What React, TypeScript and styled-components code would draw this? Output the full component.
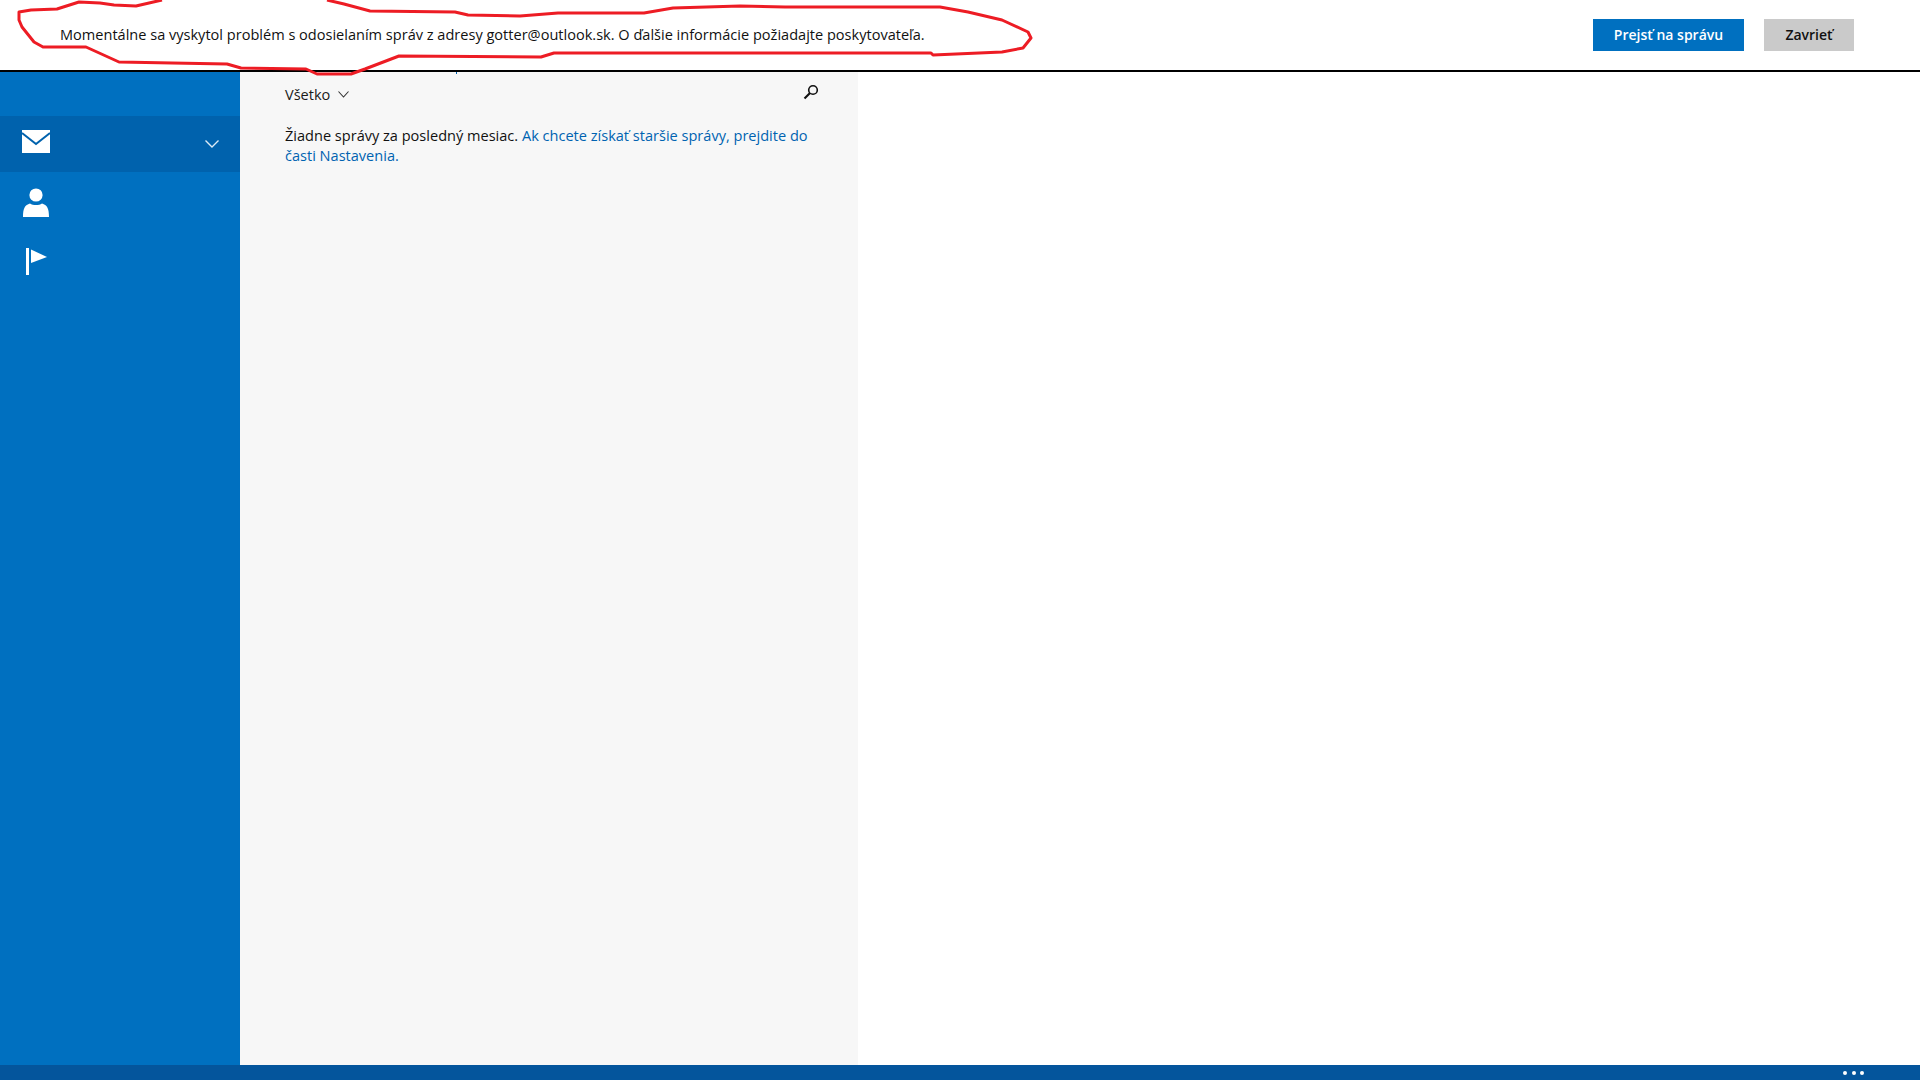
import React from 'react'
import styled, { createGlobalStyle } from 'styled-components'

const GlobalStyle = createGlobalStyle`
  html, body {
    margin: 0;
    padding: 0;
    overflow: hidden;
    background: #fff;
  }
  body {
    font-family: "Open Sans", "Liberation Sans", sans-serif;
    color: #1a1a1a;
  }
`

const Page = styled.div`
  position: relative;
  display: flex;
  flex-direction: column;
  width: 1920px;
  height: 1080px;
  overflow: hidden;
`

const Notice = styled.header`
  display: flex;
  align-items: center;
  flex: 0 0 70px;
  padding: 0 66px 0 60px;
  border-bottom: 2px solid #000;
`

const NoticeText = styled.p`
  flex: 1;
  margin: 0 0 2px;
  font-size: 14.56px;
  color: #111;
`

const NoticeButton = styled.button<{ $primary?: boolean }>`
  height: 32px;
  margin-left: 20px;
  padding: 0 0 2px;
  width: ${p => (p.$primary ? '151px' : '90px')};
  border: 0;
  font-family: inherit;
  font-size: 14px;
  font-weight: 600;
  background: ${p => (p.$primary ? '#0070c0' : '#cacaca')};
  color: ${p => (p.$primary ? '#fff' : '#111')};
`

const Main = styled.div`
  display: flex;
  flex: 1;
  min-height: 0;
`

const Sidebar = styled.nav`
  display: flex;
  flex-direction: column;
  gap: 3px;
  flex: 0 0 240px;
  padding-top: 44px;
  background: #0070c0;
`

const NavRow = styled.div<{ $active?: boolean }>`
  display: flex;
  align-items: center;
  justify-content: space-between;
  height: 56px;
  padding: 0 21px 0 22px;
  background: ${p => (p.$active ? '#0062ad' : 'transparent')};
`

const MailIcon = styled.svg`
  margin-bottom: 5px;
`

const FolderPane = styled.section`
  position: relative;
  flex: 0 0 618px;
  padding: 10px 32px 0 45px;
  box-sizing: border-box;
  background: #f7f7f7;
`

const ClippedTick = styled.span`
  position: absolute;
  left: 216px;
  top: 0;
  width: 1px;
  height: 2px;
  background: #0063b1;
`

const FilterRow = styled.div`
  display: flex;
  align-items: center;
  justify-content: space-between;
  height: 24px;
  padding-right: 7px;
`

const Filter = styled.div`
  display: flex;
  align-items: center;
  gap: 8px;
  font-size: 14.56px;
`

const SearchIcon = styled.svg`
  margin-bottom: 4px;
`

const EmptyText = styled.p`
  margin: 19px 0 0;
  font-size: 14.56px;
  line-height: 20px;
  color: #111;
`

const SettingsLink = styled.a`
  color: #0063b1;
  text-decoration: none;
`

const Reading = styled.div`
  flex: 1;
`

const AppBar = styled.footer`
  display: flex;
  align-items: center;
  justify-content: flex-end;
  gap: 4.5px;
  flex: 0 0 15px;
  padding-right: 56px;
  background: #04559c;
`

const Dot = styled.span`
  width: 4px;
  height: 4px;
  border-radius: 50%;
  background: #fff;
`

const Scribble = styled.svg`
  position: absolute;
  left: 0;
  top: 0;
  pointer-events: none;
`

const scribble =
  'M162 0 L136 6 L114 5 L100 3 L79 2 L57 9 L31 10 L19 12 L19 20 L22 27 L34 42 L43 47 L86 47 L119 62 L172 63 L227 64 L241 68 L306 69 L317 74 L351 74 L365 69 L399 56 L541 57 L554 53 L623 53 L931 53 L933 55 L1002 52 L1023 48 L1031 38 L1028 32 L1002 20 L968 12 L940 7 L785 7 L740 6 L673 8 L644 13 L558 13 L520 16 L468 15 L455 12 L370 11 L344 4 L327 0'

export default function App() {
  return (
    <Page>
      <GlobalStyle />
      <Notice>
        <NoticeText>
          Momentálne sa vyskytol problém s odosielaním správ z adresy gotter@outlook.sk. O ďalšie informácie požiadajte poskytovateľa.
        </NoticeText>
        <NoticeButton $primary>Prejsť na správu</NoticeButton>
        <NoticeButton>Zavrieť</NoticeButton>
      </Notice>
      <Main>
        <Sidebar>
          <NavRow $active>
            <MailIcon width="28" height="23" viewBox="0 0 28 23">
              <rect width="28" height="23" fill="#fff" />
              <path d="M0 3 L14 14 L28 3" fill="none" stroke="#0062ad" strokeWidth="2" />
            </MailIcon>
            <svg width="14" height="8" viewBox="0 0 14 8">
              <path d="M0.5 0.5 L7 7 L13.5 0.5" fill="none" stroke="#dcebf6" strokeWidth="1.4" />
            </svg>
          </NavRow>
          <NavRow>
            <svg width="28" height="30" viewBox="0 0 28 30">
              <circle cx="14" cy="7" r="6.600" fill="#fff" />
              <path d="M1 29 C1 20 3 17 8 15.500 C11 17.500 17 17.500 20 15.500 C25 17 27 20 27 29 Z" fill="#fff" />
            </svg>
          </NavRow>
          <NavRow>
            <svg width="28" height="28" viewBox="0 0 28 28">
              <rect x="4" y="0" width="3" height="27" fill="#fff" />
              <path d="M9 1.500 L25 9 L9 15 Z" fill="#fff" />
            </svg>
          </NavRow>
        </Sidebar>
        <FolderPane>
          <ClippedTick />
          <FilterRow>
            <Filter>
              Všetko
              <svg width="11" height="7" viewBox="0 0 11 7">
                <path d="M0.5 0.5 L5.500 6 L10.500 0.5" fill="none" stroke="#333" strokeWidth="1.1" />
              </svg>
            </Filter>
            <SearchIcon width="16" height="16" viewBox="0 0 16 16">
              <circle cx="10" cy="6" r="4.300" fill="none" stroke="#111" strokeWidth="1.600" />
              <path d="M7 9 L1.500 14.500" fill="none" stroke="#111" strokeWidth="2.200" />
            </SearchIcon>
          </FilterRow>
          <EmptyText>
            Žiadne správy za posledný mesiac.{' '}
            <SettingsLink href="#">
              Ak chcete získať staršie správy, prejdite do časti Nastavenia.
            </SettingsLink>
          </EmptyText>
        </FolderPane>
        <Reading />
      </Main>
      <AppBar>
        <Dot />
        <Dot />
        <Dot />
      </AppBar>
      <Scribble width="1040" height="80" viewBox="0 0 1040 80">
        <path d={scribble} fill="none" stroke="#ed1c24" strokeWidth="3" strokeLinejoin="round" />
      </Scribble>
    </Page>
  )
}
